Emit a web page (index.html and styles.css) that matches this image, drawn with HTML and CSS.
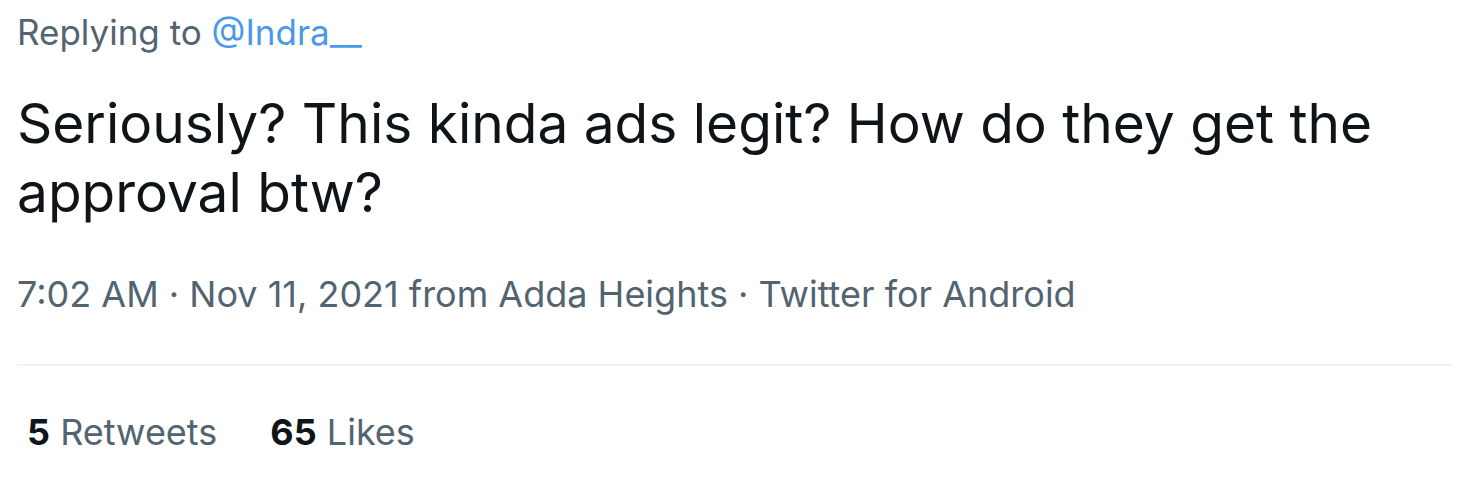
FILE: index.html
```html
<!DOCTYPE html>
<html>
  <head>
    <link rel="stylesheet" href="styles.css">
  </head>
  <body>
    <div class="tweet">
      <div class="reply">Replying to <a class="handle">@Indra__</a></div>
      <div class="text">Seriously? This kinda ads legit? How do they get the approval btw?</div>
      <div class="meta">7:02 AM · Nov 11, 2021 from Adda Heights · Twitter for Android</div>
      <div class="stats">
        <span class="stat"><b>5</b> Retweets</span>
        <span class="stat"><b>65</b> Likes</span>
      </div>
    </div>
  </body>
</html>
```

FILE: styles.css
```css
body {
  margin: 0;
  background-color: #ffffff;
  font-family: Inter, "Noto Sans", sans-serif;
}
.tweet {
  padding: 8px 31px 0 17px;
}
.reply {
  font-size: 35px;
  line-height: 48px;
  color: #536471;
}
.handle {
  color: #4a99e9;
}
.text {
  margin-top: 33px;
  font-size: 55px;
  line-height: 69px;
  color: #0f1419;
}
.meta {
  margin-top: 43px;
  padding-bottom: 46px;
  font-size: 36px;
  line-height: 48px;
  color: #536471;
  border-bottom: 2px solid #eff3f4;
}
.stats {
  display: flex;
  gap: 53px;
  padding: 42px 0 0 10px;
  font-size: 36px;
  line-height: 48px;
  color: #536471;
}
.stats b {
  color: #0f1419;
  font-weight: 700;
}
```
